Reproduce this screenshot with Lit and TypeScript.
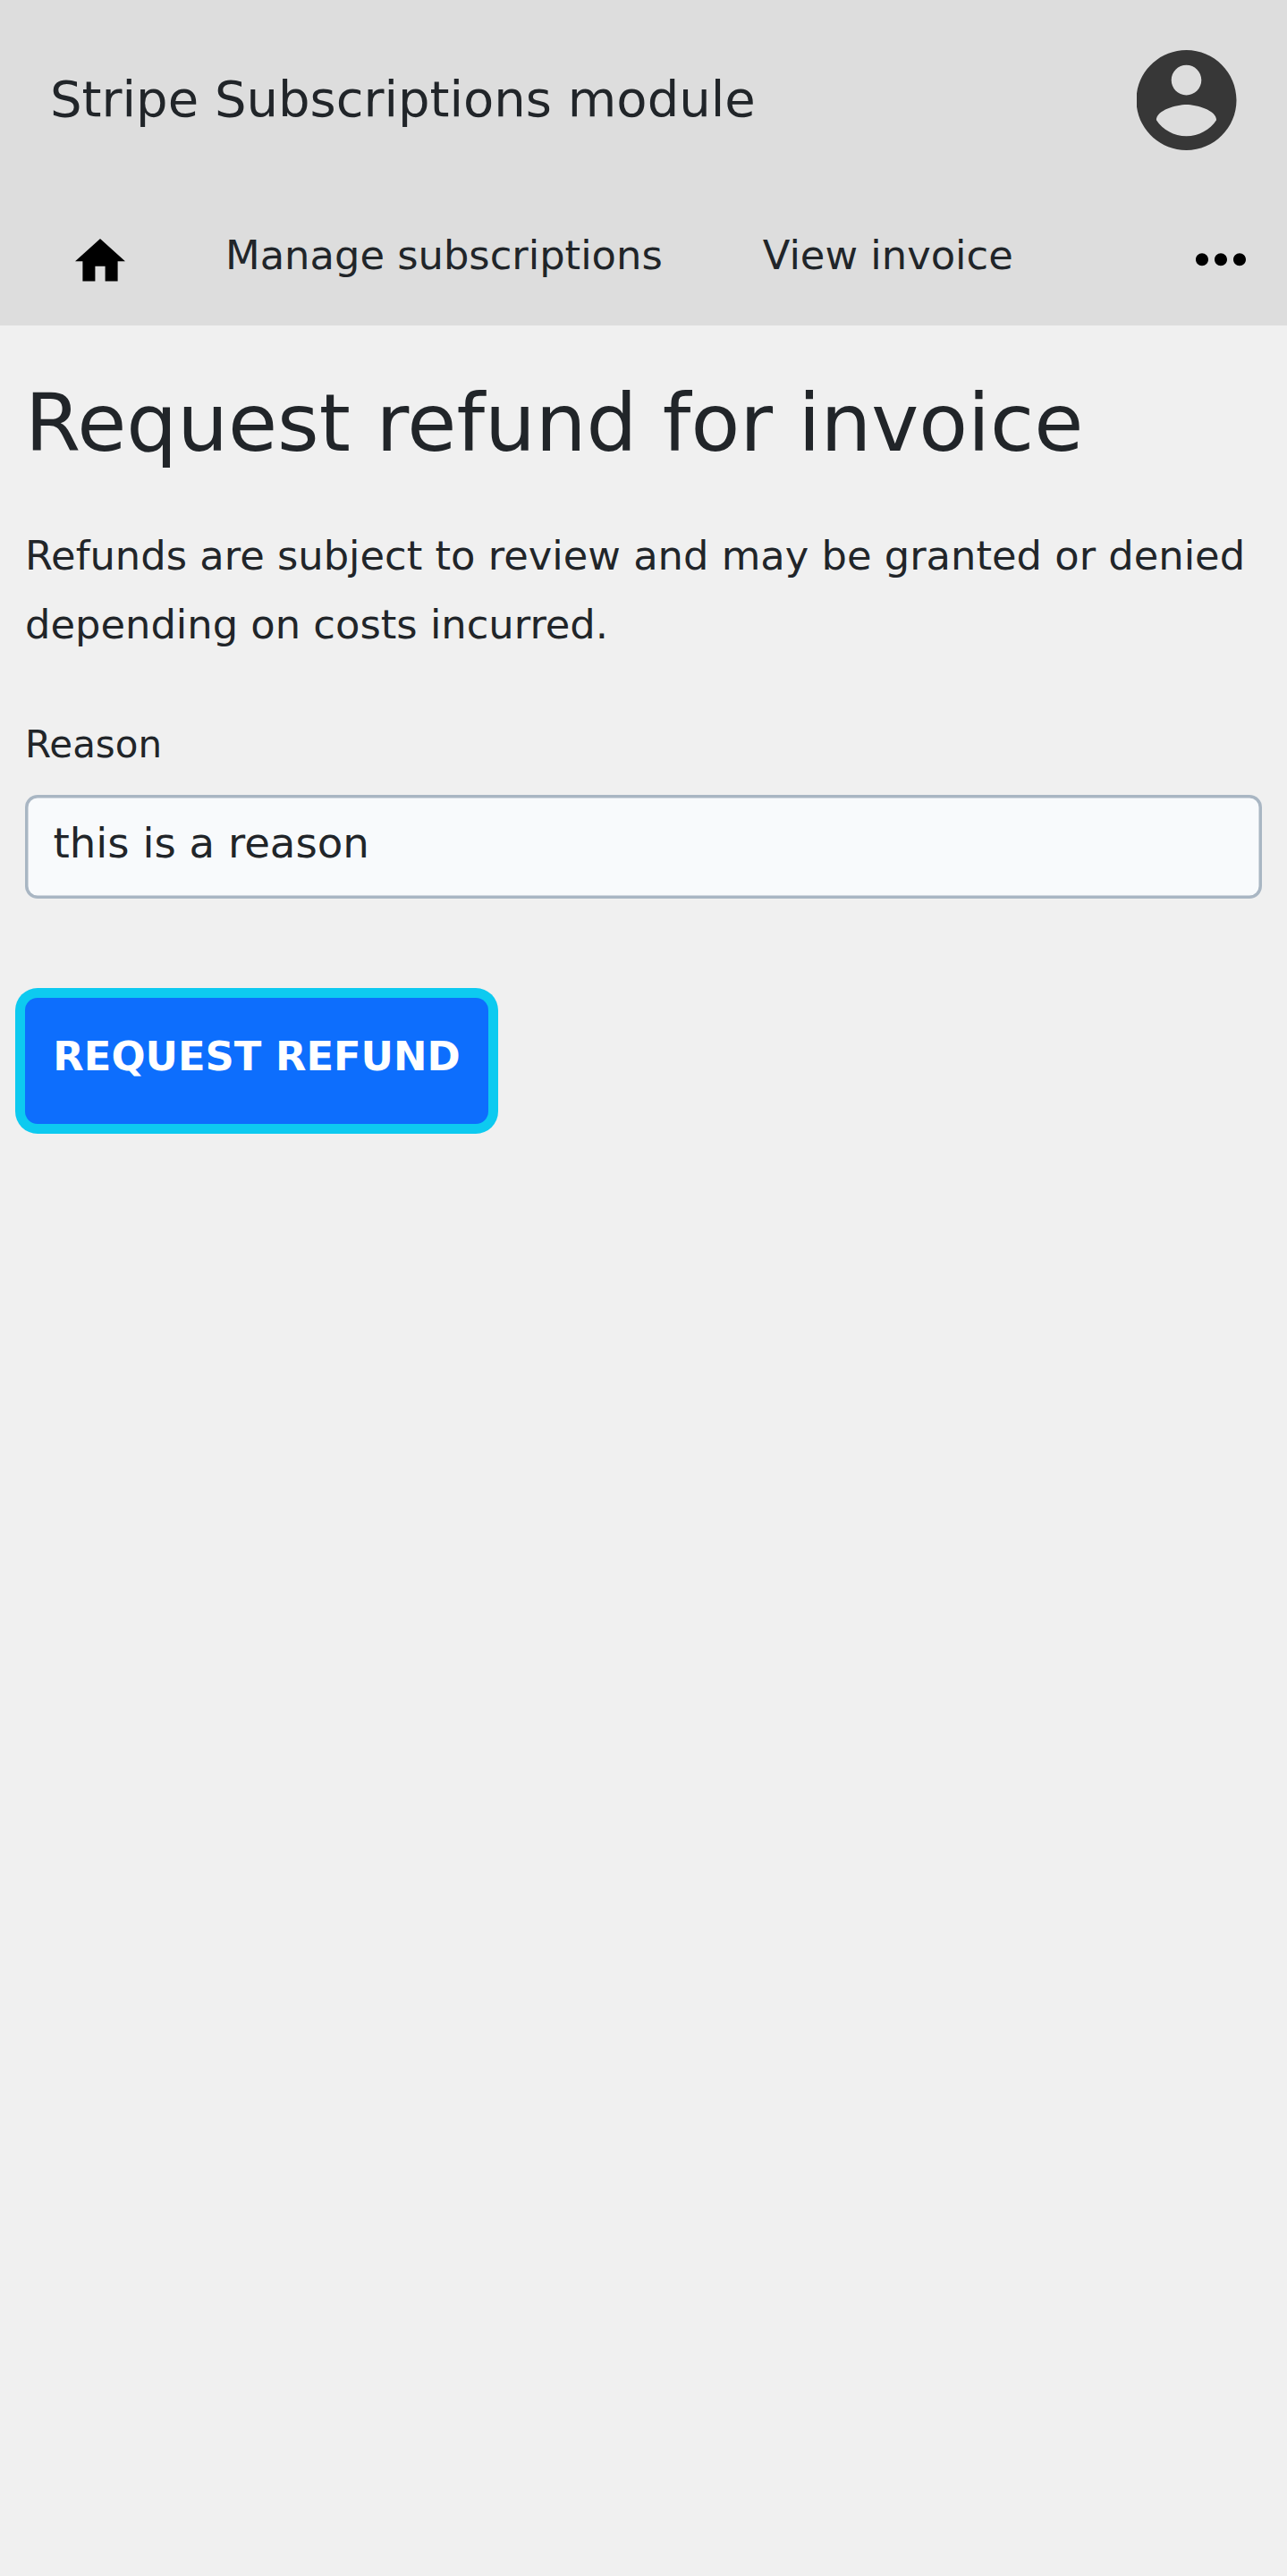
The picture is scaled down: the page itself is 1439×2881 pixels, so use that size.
import { LitElement, html, css } from "lit";
import { customElement } from "lit/decorators.js";

@customElement("app-header")
class AppHeader extends LitElement {
  static styles = css`
    :host { display: block; background: #ddd; height: 364px; }
    .bar { display: flex; align-items: center; justify-content: space-between; height: 224px; padding: 0 56px; box-sizing: border-box; }
    .title { font-size: 56px; line-height: 83px; padding-bottom: 3px; }
    .avatar { display: block; width: 112px; height: 112px; }
    .nav { display: flex; align-items: flex-start; height: 140px; box-sizing: border-box; }
    .home { display: block; width: 56px; height: 48px; margin: 43px 0 0 84px; }
    .link { font-size: 44.8px; line-height: 75px; margin-top: 24px; color: inherit; text-decoration: none; }
    .first { margin-left: 112px; }
    .second { margin-left: 112px; }
    .more { display: block; width: 56px; height: 15px; margin: 59px 46px 0 auto; }
  `;
  render() {
    return html`
      <div class="bar">
        <div class="title">Stripe Subscriptions module</div>
        <svg class="avatar" viewBox="2.09 2 20 20" fill="#373737">
          <path d="M12 2C6.48 2 2 6.48 2 12s4.48 10 10 10 10-4.48 10-10S17.52 2 12 2zm0 3c1.66 0 3 1.34 3 3s-1.34 3-3 3-3-1.34-3-3 1.34-3 3-3zm0 14.2c-2.5 0-4.71-1.28-6-3.22.03-1.99 4-3.08 6-3.08 1.99 0 5.97 1.09 6 3.08-1.29 1.94-3.5 3.22-6 3.22z"/>
        </svg>
      </div>
      <nav class="nav">
        <svg class="home" viewBox="2 3 20 17.143"><path d="M10 20v-6h4v6h5v-8h3L12 3 2 12h3v8z"/></svg>
        <a class="link first">Manage subscriptions</a>
        <a class="link second">View invoice</a>
        <svg class="more" viewBox="4 9.9 16 4.286"><path d="M6 10c-1.1 0-2 .9-2 2s.9 2 2 2 2-.9 2-2-.9-2-2-2zm12 0c-1.1 0-2 .9-2 2s.9 2 2 2 2-.9 2-2-.9-2-2-2zm-6 0c-1.1 0-2 .9-2 2s.9 2 2 2 2-.9 2-2-.9-2-2-2z"/></svg>
      </nav>
    `;
  }
}

@customElement("app-root")
class AppRoot extends LitElement {
  static styles = css`
    :host { display: block; min-height: 2881px; background: #f0f0f0; color: #212529; font-family: "DejaVu Sans", sans-serif; }
    .content { padding: 55px 28px 0; }
    .heading { margin: 0; font-size: 89.6px; line-height: 108px; font-weight: 400; }
    .note { margin: 56px 0 0; font-size: 44.8px; line-height: 77px; }
    .label { display: block; margin-top: 64px; font-size: 42px; line-height: 63px; }
    .field { display: block; box-sizing: border-box; width: 1383px; height: 116px; margin: 25px 0 0; padding: 0 31.5px 8px; border: 0; border-radius: 14px; box-shadow: inset 0 0 0 3.5px #a9b6c3; background: #f8fafc; color: #212529; font: 46.6667px "DejaVu Sans", sans-serif; outline: none; }
    .submit { display: block; box-sizing: border-box; width: 518px; height: 141px; margin: 111px 0 0; padding: 0 0 10px; border: 0; border-radius: 14px; box-shadow: 0 0 0 11px #0dcaf0; background: #0d6efd; color: #fff; font: 700 44.8px "DejaVu Sans", sans-serif; white-space: nowrap; }
  `;
  render() {
    return html`
      <app-header></app-header>
      <main class="content">
        <h1 class="heading">Request refund for invoice</h1>
        <p class="note">Refunds are subject to review and may be granted or denied depending on costs incurred.</p>
        <label class="label" for="reason">Reason</label>
        <input class="field" id="reason" type="text" .value=${"this is a reason"}>
        <button class="submit" type="button">REQUEST REFUND</button>
      </main>
    `;
  }
}
